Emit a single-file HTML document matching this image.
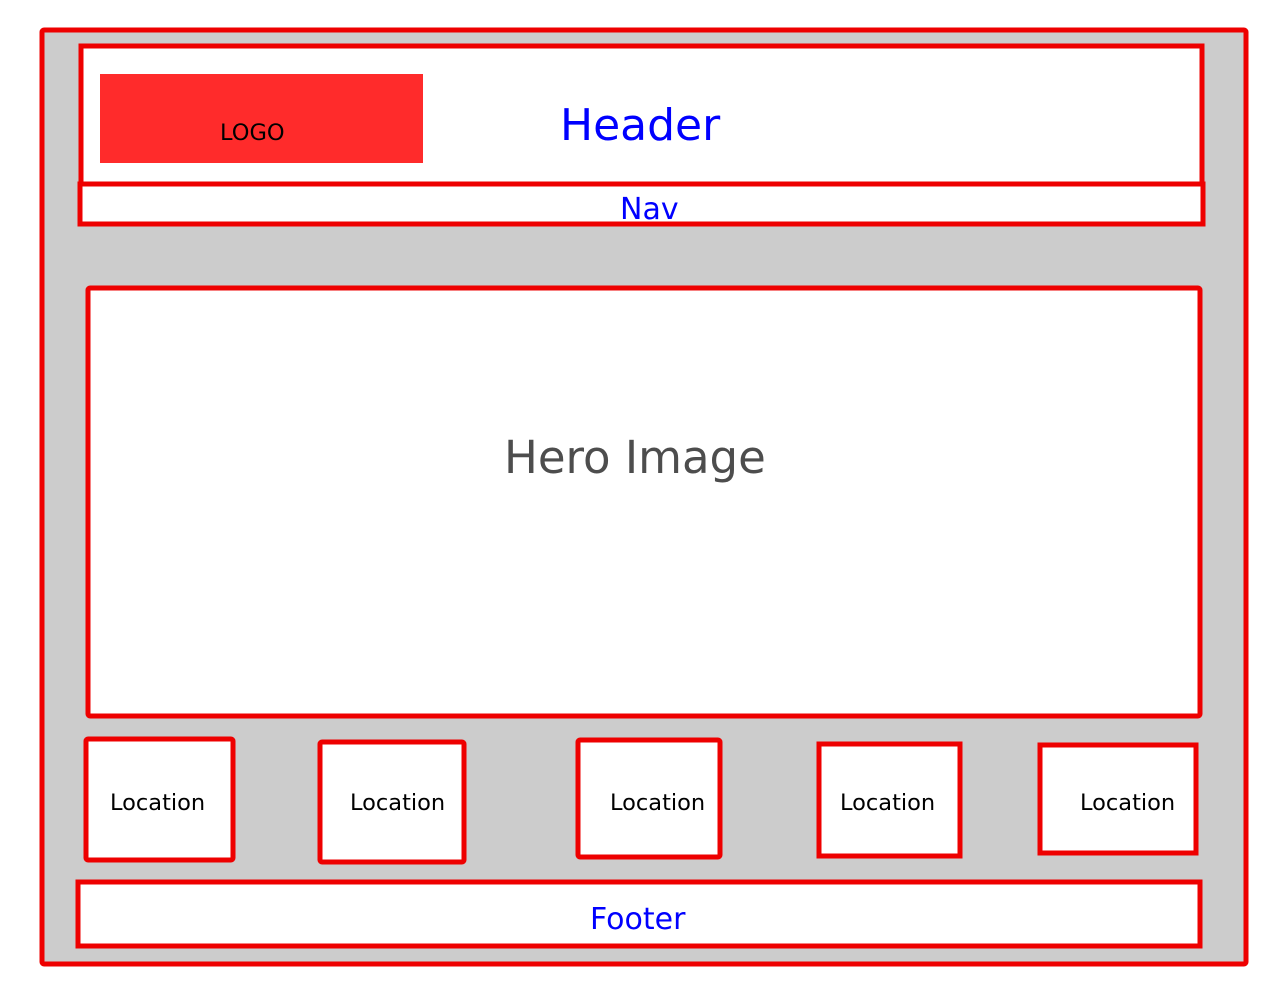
<!DOCTYPE html>
<html><head><meta charset="utf-8"><style>html,body{margin:0;padding:0;background:#fff;width:1280px;height:1000px;overflow:hidden}</style></head><body>
<svg width="1280" height="1000" xmlns="http://www.w3.org/2000/svg" font-family="DejaVu Sans, sans-serif">
<rect x="42" y="30" width="1204" height="934" rx="2" fill="#cccccc" stroke="#ee0000" stroke-width="5"/>
<rect x="81" y="46" width="1121" height="138" fill="#fff" stroke="#ee0000" stroke-width="5"/>
<rect x="100" y="74" width="323" height="89" fill="#ff2b2b"/>
<text x="220" y="140" font-size="22.5" fill="#000">LOGO</text>
<text x="560" y="140" font-size="44" fill="#0000ff">Header</text>
<rect x="80" y="184" width="1123" height="40" fill="#fff" stroke="#ee0000" stroke-width="5"/>
<text x="620" y="219" font-size="30" fill="#0000ff">Nav</text>
<rect x="88" y="288" width="1112" height="428" rx="2" fill="#fff" stroke="#ee0000" stroke-width="5"/>
<text x="504" y="473" font-size="45" fill="#4d4d4d">Hero Image</text>
<g fill="#fff" stroke="#ee0000" stroke-width="5">
<rect x="86" y="739" width="147" height="121" rx="2"/>
<rect x="320" y="742" width="144" height="120" rx="2"/>
<rect x="578" y="740" width="142" height="117" rx="2"/>
<rect x="819" y="744" width="141" height="112"/>
<rect x="1040" y="745" width="156" height="108"/>
<rect x="78" y="882" width="1122" height="64"/>
</g>
<g font-size="22.5" fill="#000">
<text x="110" y="810">Location</text>
<text x="350" y="810">Location</text>
<text x="610" y="810">Location</text>
<text x="840" y="810">Location</text>
<text x="1080" y="810">Location</text>
</g>
<text x="590" y="929" font-size="30" fill="#0000ff">Footer</text>
</svg>
</body></html>
